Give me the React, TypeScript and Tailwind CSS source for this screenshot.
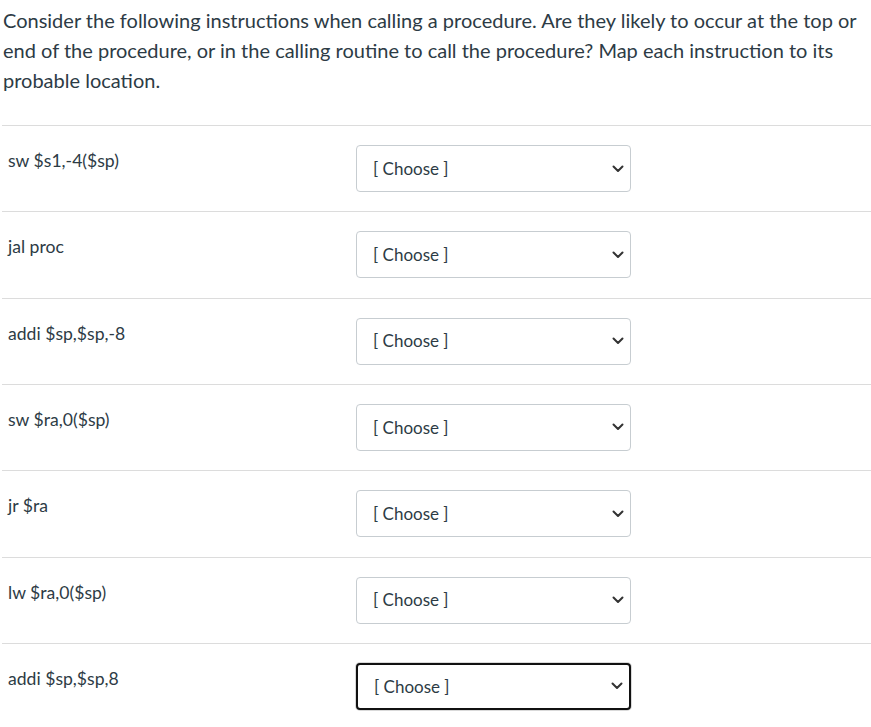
const rows = [
  'sw $s1,-4($sp)',
  'jal proc',
  'addi $sp,$sp,-8',
  'sw $ra,0($sp)',
  'jr $ra',
  'lw $ra,0($sp)',
  'addi $sp,$sp,8',
]

function Chevron() {
  return (
    <svg width="12" height="8" viewBox="0 0 12 8" fill="none" aria-hidden="true">
      <path d="M1.5 1.5 L6 6 L10.5 1.5" stroke="#333" strokeWidth="2" strokeLinecap="round" strokeLinejoin="round" />
    </svg>
  )
}

function FakeSelect({ focused }: { focused?: boolean }) {
  return (
    <div
      role="combobox"
      className={`w-[275px] h-[47px] flex items-center justify-between pl-[16px] pr-[6px] rounded-[4px] bg-white text-[17px] text-[#2d3b45] ${
        focused ? 'border-2 border-[#111] shadow-[0_0_0_1px_#d9d9d9]' : 'border border-[#c7cdd1]'
      }`}
    >
      <span>[ Choose ]</span>
      <Chevron />
    </div>
  )
}

export default function App() {
  return (
    <div className="min-h-screen bg-white text-[#2d3b45] font-['Lato','Liberation_Sans',sans-serif]">
      <p className="pl-[3px] pr-2 pt-[5px] text-[20px] leading-[30px]">
        Consider the following instructions when calling a procedure. Are they likely to occur at the top or end of the
        procedure, or in the calling routine to call the procedure? Map each instruction to its probable location.
      </p>

      <div className="mt-[30px] ml-[2px]">
        {rows.map((label, i) => (
          <div key={i} className="flex border-t border-[#dcdcdc] pt-[19px] pb-[19.33px]">
            <div className="w-[354px] pl-[6px] pt-[3px] text-[17.6px] leading-[26px]">{label}</div>
            <FakeSelect focused={i === rows.length - 1} />
          </div>
        ))}
      </div>
    </div>
  )
}
